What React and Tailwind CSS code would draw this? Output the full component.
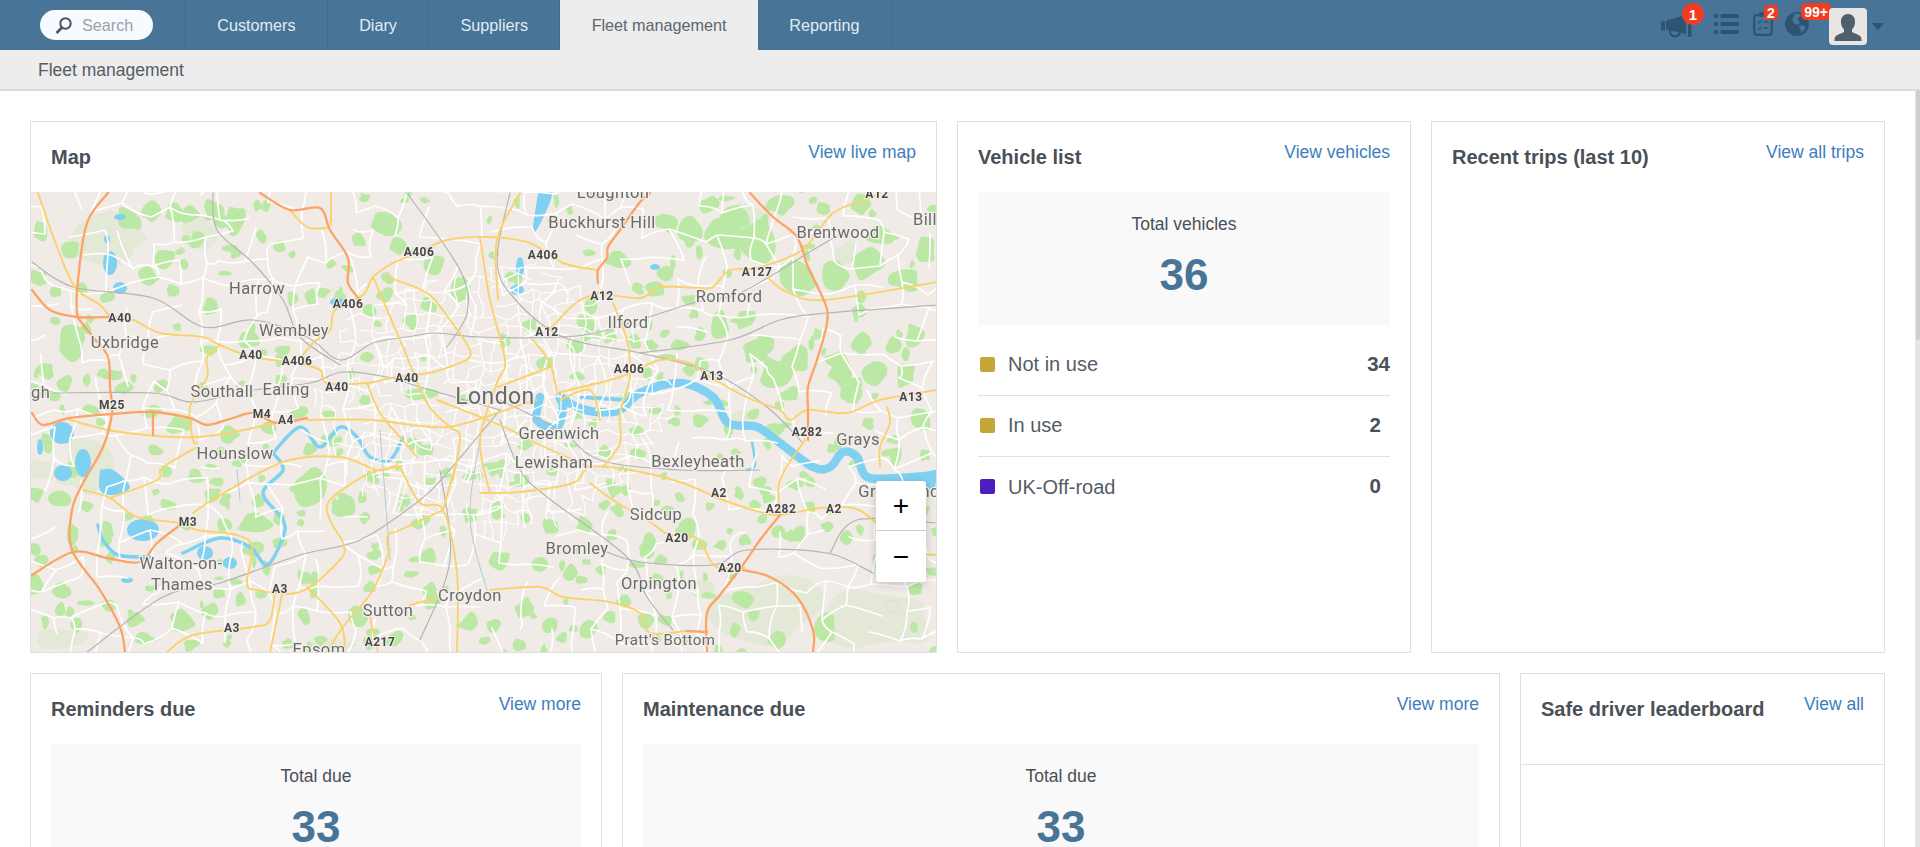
import React from "react";

function rng(seed) {
  let s = seed;
  return () => {
    s = (s * 16807) % 2147483647;
    return (s - 1) / 2147483646;
  };
}
function blob(r, x, y, rx, ry = rx) {
  const n = 9;
  const pts = [];
  for (let i = 0; i < n; i++) {
    const a = (i / n) * Math.PI * 2;
    const k = 0.55 + r() * 0.7;
    pts.push([x + Math.cos(a) * rx * k, y + Math.sin(a) * ry * k]);
  }
  const mid = (a, b) => [(a[0] + b[0]) / 2, (a[1] + b[1]) / 2];
  const f = (v) => v.toFixed(1);
  const s0 = mid(pts[n - 1], pts[0]);
  let d = `M${f(s0[0])} ${f(s0[1])}`;
  for (let i = 0; i < n; i++) {
    const m = mid(pts[i], pts[(i + 1) % n]);
    d += `Q${f(pts[i][0])} ${f(pts[i][1])} ${f(m[0])} ${f(m[1])}`;
  }
  return d + "Z";
}
// smooth line through points (Catmull-Rom)
const line = (p) => {
  let d = `M${p[0][0]} ${p[0][1]}`;
  for (let i = 0; i < p.length - 1; i++) {
    const a = p[Math.max(i - 1, 0)], b = p[i], c = p[i + 1], e = p[Math.min(i + 2, p.length - 1)];
    const c1 = [b[0] + (c[0] - a[0]) / 6, b[1] + (c[1] - a[1]) / 6];
    const c2 = [c[0] - (e[0] - b[0]) / 6, c[1] - (e[1] - b[1]) / 6];
    d += `C${c1[0].toFixed(1)} ${c1[1].toFixed(1)} ${c2[0].toFixed(1)} ${c2[1].toFixed(1)} ${c[0]} ${c[1]}`;
  }
  return d;
};

const greenBig = [
  [728,232,24,18],[760,240,20,22],[735,215,18,13],[690,230,14,15],[668,222,13,12],[800,275,18,20],[835,275,18,14],[868,265,16,18],[905,280,15,13],[880,235,16,12],[780,205,16,13],[800,185,12,11],[860,205,11,11],[925,250,11,14],[710,205,12,9],
  [775,375,20,22],[795,360,16,17],[755,350,16,13],[720,325,14,14],[745,320,13,11],[840,370,13,18],[875,375,14,13],[860,345,12,12],[915,335,12,13],[905,375,12,14],[850,395,15,11],[920,420,11,13],[895,345,11,9],[765,345,12,10],[790,395,12,9],
  [618,260,14,9],[655,290,12,8],[665,275,11,9],[610,335,9,9],[586,322,11,11],[590,305,7,10],[575,345,9,8],[530,325,8,7],[505,340,8,8],[545,365,9,8],[630,395,8,6],[650,345,8,8],[680,345,10,8],[700,335,7,7],[700,365,8,8],
  [128,220,16,14],[150,212,12,11],[175,215,13,11],[190,215,11,10],[215,210,14,12],[235,220,12,16],[280,248,9,7],[197,240,10,9],[165,260,12,12],[148,276,11,13],[38,278,9,9],[70,250,10,10],[40,232,7,11],
  [385,223,18,12],[358,240,9,9],[398,245,8,11],[436,265,11,10],[428,305,11,10],[458,290,12,14],[410,320,9,8],[385,295,9,8],[340,298,8,10],[370,310,7,9],[312,298,8,10],[292,300,7,8],
  [70,345,16,19],[45,370,12,10],[65,385,9,10],[210,350,10,6],[250,340,16,9],[200,390,10,8],[125,388,10,8],[160,385,8,8],[90,410,11,8],[180,425,14,10],[230,435,10,10],[298,412,9,8],[330,440,11,7],[280,380,7,7],[420,395,20,8],[465,400,7,8],
  [30,390,10,8],[48,447,8,11],[72,470,7,8],[36,495,10,8],[60,500,11,9],[35,550,8,9],
  [310,490,20,24],[345,505,14,16],[255,525,18,12],[255,550,12,8],
  [212,495,10,9],[167,505,10,8],[195,477,8,8],[225,500,7,7],[155,450,8,6],[148,520,8,6],[108,530,8,10],[72,535,7,10],[258,500,7,7],[35,585,10,12],[60,590,12,9],[60,610,9,8],[108,605,8,7],[180,620,13,12],[210,612,8,10],[135,620,10,9],[145,640,11,8],[190,645,9,8],[240,600,7,8],[305,617,8,8],[360,615,11,11],[395,640,10,9],[320,640,7,6],[432,600,10,11],[470,622,11,10],[495,625,8,8],
  [372,478,7,8],[375,570,8,6],[375,555,8,6],[430,557,9,9],[430,590,8,8],[425,520,7,6],[405,500,7,7],[470,515,9,8],[470,475,7,7],[500,560,12,10],[520,480,9,8],[497,510,9,9],[500,465,7,6],
  [550,527,10,9],[585,525,10,10],[540,565,9,7],[570,572,8,9],[600,570,7,6],[617,510,8,7],[612,535,7,6],[650,540,7,7],[625,600,10,7],[660,560,7,6],[688,530,9,12],[700,545,8,8],[648,545,9,8],[612,490,6,9],[605,505,6,5],[668,512,8,6],[720,545,7,5],[525,610,11,10],[550,625,9,8],[590,630,9,10],[645,620,9,8],[520,645,8,7],
  [745,600,13,9],[755,615,7,7],[735,630,5,8],[825,627,12,17],[795,485,10,6],[810,482,6,6],[765,490,7,5],[740,495,6,5],[745,540,7,6],[860,530,6,6],[910,525,8,8],[755,505,6,5],[680,497,6,6],[625,490,7,6],[665,620,10,6],[775,640,10,9],
  [605,452,7,7],[640,455,10,7],[700,420,10,7],[775,430,10,8],[655,410,8,6],[525,445,9,6],[495,470,7,8],
  [838,443,6,9],[895,455,8,12],[925,455,7,8],[925,510,7,6],[893,440,7,5],
];
const paleBig = [[770,610,60,35],[880,620,60,35],[110,240,40,32],[40,470,20,16],[85,470,30,30],[330,645,30,8],[740,420,13,10],[700,590,18,12],[60,640,40,14],[200,232,20,18],[125,250,14,14],[745,215,20,16],[846,255,12,16],[270,290,6,6]];

function buildMap() {
  const r = rng(4711);
  const green = [];
  greenBig.forEach(([x, y, a, b]) => green.push(blob(r, x, y, a, b)));
  for (let i = 0; i < 300; i++) {
    const x = 31 + r() * 906;
    const y = 192 + r() * 461;
    const dc = Math.hypot((x - 490) / 1.3, y - 395);
    if (dc < 60) continue;
    green.push(blob(r, x, y, 3 + r() * 6, 3 + r() * 5));
  }
  const pale = paleBig.map(([x, y, a, b]) => blob(r, x, y, a, b));
  const seg = (a, b, out) => {
    const mx = (a[0] + b[0]) / 2 + (r() - 0.5) * 9;
    const my = (a[1] + b[1]) / 2 + (r() - 0.5) * 9;
    out.push(`M${a[0].toFixed(0)} ${a[1].toFixed(0)}Q${mx.toFixed(0)} ${my.toFixed(0)} ${b[0].toFixed(0)} ${b[1].toFixed(0)}`);
  };
  const grid = (cell, jit, keep, p, out) => {
    const nodes = {};
    const N = (i, j) => {
      const k = i + "," + j;
      if (!nodes[k]) nodes[k] = [25 + i * cell + (r() - 0.5) * jit, 186 + j * cell + (r() - 0.5) * jit];
      return nodes[k];
    };
    for (let i = 0; i * cell < 925; i++)
      for (let j = 0; j * cell < 475; j++) {
        const a = N(i, j);
        if (!keep(a)) continue;
        if (r() < p) seg(a, N(i + 1, j), out);
        if (r() < p) seg(a, N(i, j + 1), out);
      }
  };
  const roads = [];
  grid(25, 18, () => true, 0.58, roads);
  const fine = [];
  grid(13, 9, ([x, y]) => Math.hypot((x - 490) / 1.35, y - 395) < 130, 0.7, fine);
  return { green: green.join(""), pale: pale.join(""), roads: roads.join(""), fine: fine.join("") };
}
const M = buildMap();

const orange = [
  [[108,193],[87,223],[78,280],[77,313],[82,323],[93,337],[108,357],[110,387],[112,413],[103,447],[83,483],[72,510],[72,550],[100,590],[120,627],[125,652]],
  [[32,290],[50,310],[77,317],[110,317]],
  [[32,413],[43,425],[70,418],[113,414],[153,412],[190,418],[207,425],[233,418],[253,413],[277,423],[307,418]],
  [[260,193],[290,210],[320,208],[330,230],[348,258],[348,283],[360,300]],
  [[32,575],[73,552],[107,558],[140,562],[157,543],[183,523]],
  [[650,193],[640,202],[620,230],[608,247],[607,258],[598,270],[598,283]],
  [[750,193],[773,217],[797,237],[808,267],[825,303],[827,323],[817,360],[808,387],[808,410],[808,440]],
  [[780,515],[760,540],[743,565],[720,595],[707,613],[707,652]],
  [[743,570],[770,577],[797,597],[813,630],[813,652]],
  [[687,631],[707,632]],
  [[153,412],[153,435]],
];
const yellow = [
  [[110,317],[133,320],[160,333],[203,337],[220,345],[253,357],[297,363],[320,370],[327,383],[367,383],[390,378],[433,372],[467,360]],
  [[297,363],[313,343],[330,330],[335,310],[363,295],[373,277],[393,263],[420,252],[447,240],[490,237],[530,243],[563,263],[597,270]],
  [[597,293],[640,298],[660,287],[700,288],[713,287],[730,270],[757,268],[802,250],[833,213],[870,198],[880,193]],
  [[767,277],[787,292],[825,300],[937,282]],
  [[613,303],[627,340],[630,377],[620,413],[620,443],[603,467]],
  [[547,332],[577,302],[597,295]],
  [[533,340],[550,363],[557,393]],
  [[498,387],[550,367]],
  [[557,393],[620,377],[660,360],[690,363],[700,370],[727,387],[753,400],[780,410],[790,420],[808,410],[847,413],[880,400],[937,390]],
  [[887,407],[890,423],[880,447],[880,467]],
  [[480,493],[520,492],[573,483],[590,467],[630,470],[680,482],[723,500],[760,512],[780,515],[820,508],[853,508],[873,520],[905,550],[937,555]],
  [[780,515],[780,480],[805,440]],
  [[590,483],[613,500],[647,520],[670,535],[697,538],[710,560],[720,568],[745,568]],
  [[490,590],[540,587],[563,597],[610,602],[640,613],[650,633],[687,631]],
  [[38,193],[57,247],[75,287],[100,305],[110,317]],
  [[220,345],[207,357],[207,377],[190,407],[193,440],[197,443]],
  [[70,420],[120,432],[197,437],[277,423]],
  [[83,490],[110,498],[137,517],[180,523],[197,530],[237,535],[252,547],[247,583],[257,590],[300,592],[340,560],[343,543],[330,520],[330,500],[370,473],[400,467]],
  [[110,498],[157,480],[162,468],[197,447]],
  [[193,513],[217,497],[283,462],[340,457],[377,470],[397,465]],
  [[275,590],[270,620],[253,627],[193,635],[167,652]],
  [[283,590],[270,652]],
  [[307,587],[340,623],[345,652]],
  [[390,550],[373,590],[343,627],[327,652]],
  [[443,510],[400,530],[388,535],[388,550]],
  [[400,467],[420,503],[443,510],[457,573],[457,652]],
  [[457,460],[443,510]],
  [[410,605],[440,597]],
  [[370,617],[378,652]],
  [[367,383],[380,413],[400,437],[417,457]],
  [[373,277],[403,347],[427,403],[450,427],[460,437],[453,480]],
  [[387,277],[427,293],[450,320],[470,350],[467,360]],
  [[307,420],[373,420],[447,427],[520,405],[537,400]],
  [[290,210],[307,227],[327,228]],
  [[331,193],[331,225]],
  [[480,237],[490,300],[505,360],[497,383],[480,440],[490,493]],
  [[437,400],[500,425],[540,445],[590,467]],
  [[520,193],[497,240],[498,300]],
  [[560,400],[590,390],[600,420]],
];
const rail = [
  [[32,262],[73,287],[153,298],[203,327],[253,320],[307,337],[340,360],[373,343],[407,337],[437,333],[480,337],[560,337],[607,330],[693,303],[740,293],[813,250],[847,230]],
  [[213,193],[217,230],[253,263],[283,300],[300,337],[340,365]],
  [[53,393],[153,393],[193,402],[253,390],[310,383],[343,372],[387,377],[420,387],[500,410]],
  [[407,193],[460,270],[467,313],[447,347]],
  [[510,193],[497,260],[513,297],[563,337],[640,353],[713,373],[767,407],[803,443]],
  [[640,353],[730,340],[780,320],[827,313],[937,305]],
  [[87,652],[163,597],[220,583],[300,555],[360,540],[420,500],[447,473],[500,410]],
  [[500,420],[520,470],[547,497],[627,557],[647,597],[673,630]],
  [[607,552],[640,562],[713,565],[747,550],[827,553],[873,573]],
  [[830,553],[857,520],[937,523]],
  [[500,400],[560,430],[600,460],[680,470],[760,470]],
  [[440,470],[450,560],[420,640]],
];
const thin = [
  [[480,440],[470,520],[490,600]],
  [[380,430],[390,560]],
  [[237,470],[240,500]],
];
const river = [
  { d: [[540,397],[537,420],[557,427],[563,407],[560,397],[577,407],[597,412],[620,410],[640,393],[680,383],[713,397],[728,423],[757,427],[780,443],[813,467],[830,467],[843,452],[857,457],[867,477],[897,478],[937,475]], w: 8.5 },
  { d: [[273,453],[300,427],[320,447],[340,427],[357,437],[370,457],[390,460],[403,438]], w: 3.5 },
  { d: [[273,453],[283,470],[263,493],[283,520],[283,537],[267,565],[250,547],[220,538],[183,553]], w: 3.5 },
  { d: [[580,397],[627,400]], w: 4 },
  { d: [[98,525],[103,540],[118,555],[150,557]], w: 3.5 },
  { d: [[752,442],[755,465],[747,470]], w: 2.5 },
];
const waterPoly = [
  [[100,470],[113,470],[130,487],[113,495],[100,490],[100,470]],
  [[538,193],[552,193],[542,220],[533,232],[538,193]],
  [[893,483],[937,470],[937,487],[905,488],[893,483]],
];
const waterEll = [[143,530,16,11],[83,463,8,14],[63,473,9,8],[62,433,12,11],[520,267,4,10],[517,290,7,5],[655,267,5,3],[110,263,7,12],[120,288,7,6],[120,217,6,3],[107,239,3,4],[337,302,7,4],[230,563,7,6],[205,553,8,7],[127,580,6,3],[40,447,3,8]];

const towns = [
  ["Loughton",613,198,16.5],["Buckhurst Hill",602,228,16.5],["Brentwood",838,238,16.5],["Harrow",257,294,16.5],["Wembley",294,336,16.5],["Uxbridge",125,348,16.5],["Southall",222,397,16.5],["Ealing",286,395,16.5],["Hounslow",235,459,16.5],["Romford",729,302,16.5],["Ilford",628,328,16.5],["Greenwich",559,439,16.5],["Lewisham",554,468,16.5],["Bexleyheath",698,467,16.5],["Grays",858,445,16.5],["Sidcup",656,520,16.5],["Bromley",577,554,16.5],["Orpington",659,589,16.5],["Croydon",470,601,16.5],["Sutton",388,616,16.5],["Walton-on-",181,569,16.5],["Thames",182,590,16.5],["Pratt's Bottom",665,645,15],["Epsom",319,655,16.5],["Gravesend",899,497,16.5],["London",495,404,23],
];
const shields = [
  ["A406",419,256],["A406",348,308],["A40",120,322],["A40",251,359],["A406",297,365],["A40",337,391],["A40",407,382],["M25",112,409],["M4",262,418],["A4",286,424],["A406",543,259],["A12",877,198],["A127",757,276],["A12",602,300],["A12",547,336],["A406",629,373],["A13",712,380],["A13",911,401],["A282",807,436],["M3",188,526],["A3",280,593],["A3",232,632],["A217",380,646],["A2",719,497],["A282",781,513],["A2",834,513],["A20",677,542],["A20",730,572],
];

function MapArt() {
  return (
    <svg viewBox="31 192 906 461" width="906" height="461" className="block blur-[0.4px] font-['Roboto',sans-serif]">
      <rect x="31" y="192" width="906" height="461" fill="#f0ebe6" />
      <path d={M.pale} fill="#e4e8d6" />
      <path d={M.green} fill="#bce8a6" />
      <g fill="#80d1f1">
        {waterPoly.map((p, i) => <path key={i} d={line(p) + "Z"} />)}
        {waterEll.map(([x, y, a, b], i) => <ellipse key={i} cx={x} cy={y} rx={a} ry={b} />)}
      </g>
      <g fill="none" stroke="#80d1f1" strokeLinejoin="round" strokeLinecap="round">
        {river.map((p, i) => <path key={i} d={line(p.d)} strokeWidth={p.w} />)}
      </g>
      <path d={M.roads} fill="none" stroke="#ffffff" strokeWidth="1.7" strokeLinecap="round" />
      <path d={M.fine} fill="none" stroke="#ffffff" strokeWidth="1.2" strokeLinecap="round" />
      <g fill="none" strokeLinejoin="round" strokeLinecap="round">
        {rail.map((p, i) => <path key={i} d={line(p)} stroke="#b4b4b4" strokeWidth="1.2" />)}
        {thin.map((p, i) => <path key={i} d={line(p)} stroke="#b7c9d6" strokeWidth="1" />)}
        {yellow.map((p, i) => <path key={i} d={line(p)} stroke="#f9d26d" strokeWidth="1.9" />)}
        {orange.map((p, i) => <path key={i} d={line(p)} stroke="#fda366" strokeWidth="2.3" />)}
      </g>
      <g textAnchor="middle" fill="#6a6a6a" stroke="#f2eeea" strokeWidth="2.5" paintOrder="stroke" letterSpacing="0.4">
        {towns.map(([t, x, y, s]) => <text key={t} x={x} y={y} fontSize={s}>{t}</text>)}
        <text x="31" y="398" fontSize="16.5" textAnchor="start">gh</text>
        <text x="913" y="225" fontSize="16.5" textAnchor="start">Bill</text>
      </g>
      <g textAnchor="middle" fill="#474747" stroke="#f2eeea" strokeWidth="2" paintOrder="stroke" fontWeight="700" letterSpacing="0.5">
        {shields.map(([t, x, y]) => <text key={t + x} x={x} y={y} fontSize="12">{t}</text>)}
      </g>
      <circle cx="892" cy="606" r="6" fill="none" stroke="#e2ded9" strokeWidth="2" />
    </svg>
  );
}

const ICON = "#2f5471";

function Megaphone() {
  return (
    <svg viewBox="0 0 34 24" className="w-[34px] h-[24px]" fill={ICON}>
      <path d="M1 7.5L5 7V17L1 16.5Z" />
      <path d="M6 6.6L26 1V20L6 15.5Z" />
      <rect x="28" y="0" width="3.5" height="23" rx="1" />
      <path d="M10 16.5a5 5 0 0 0 10 1.5" fill="none" stroke={ICON} strokeWidth="2.4" />
    </svg>
  );
}
function ListIcon() {
  return (
    <svg viewBox="0 0 25 22" className="w-[25px] h-[22px]" fill={ICON}>
      <circle cx="2.2" cy="3" r="2.2" /><rect x="6.5" y="1" width="18.5" height="4" rx="1" />
      <circle cx="2.2" cy="11" r="2.2" /><rect x="6.5" y="9" width="18.5" height="4" rx="1" />
      <circle cx="2.2" cy="19" r="2.2" /><rect x="6.5" y="17" width="18.5" height="4" rx="1" />
    </svg>
  );
}
function ClipboardIcon() {
  return (
    <svg viewBox="0 0 20 25" className="w-[20px] h-[25px]" fill="none" stroke={ICON}>
      <rect x="1.2" y="4" width="17.6" height="19.8" rx="2.5" strokeWidth="2.2" />
      <rect x="6" y="1" width="8" height="5" rx="1.5" fill={ICON} strokeWidth="0" />
      <path d="M5 10.5l1.5 1.5 2.2-3M5 17l1.5 1.5 2.2-3" strokeWidth="1.1" />
      <path d="M10.5 11h5M10.5 17h5" strokeWidth="1.5" />
    </svg>
  );
}
function GlobeIcon() {
  return (
    <svg viewBox="0 0 24 24" className="w-[24px] h-[24px]">
      <circle cx="12" cy="12" r="12" fill={ICON} />
      <path d="M9 2c3-1 6-.5 7 1-1 2-3 2-3.5 3.5S15 9 14.5 11s-3 1.5-5 .5S7 8 8 6s1-2 1-4ZM14 14c2-1 5-1 6 .5s-1.5 5-4 6.5c-1-1 .5-3-.5-4S13.500 15 14 14Z" fill="#487597" />
    </svg>
  );
}
function UserIcon() {
  return (
    <svg viewBox="0 0 38 37" className="w-[38px] h-[37px]">
      <rect width="38" height="37" rx="4" fill="#e8e6e4" />
      <path d="M19 6c5 0 7.500 4 7 9-.3 3-1.500 5-3 6.500V24c2 1.500 7 2.500 8.500 4.500 1 1.300 1 3.200 1 4.500H5.500c0-1.300 0-3.200 1-4.500C8 26.500 13 25.500 15 24v-2.500C13.500 20 12.300 18 12 15c-.5-5 2-9 7-9Z" fill="#4f5f6e" />
    </svg>
  );
}
function Badge({ className, children }) {
  return (
    <span className={"absolute flex items-center justify-center bg-[#f03c22] text-white font-bold text-[14px] leading-none " + className}>
      {children}
    </span>
  );
}

function Card({ title, link, children, className = "" }) {
  return (
    <div className={"border border-[#e0e0e0] bg-white " + className}>
      <div className="flex justify-between items-start h-[70px] px-[20px]">
        <h3 className="mt-[25px] text-[20px] leading-[21px] font-bold text-[#4a5058]">{title}</h3>
        <a className="mt-[20px] text-[17.5px] leading-[20px] text-[#3d7ebd]">{link}</a>
      </div>
      {children}
    </div>
  );
}
function Stat({ label, value }) {
  return (
    <div className="h-[133px] bg-[#f9f9f9] flex flex-col items-center">
      <div className="mt-[23px] text-[17.5px] leading-[18px] text-[#4a5058]">{label}</div>
      <div className="mt-[18px] text-[44px] leading-[48px] font-bold text-[#487597]">{value}</div>
    </div>
  );
}
function Row({ color, label, value, pad, last }) {
  return (
    <div className={"h-[61px] pb-[2px] flex items-center " + (last ? "" : "border-b border-[#e0e0e0]")}>
      <span className="ml-[2px] w-[15px] h-[15px] rounded-[2px]" style={{ backgroundColor: color }} />
      <span className="ml-[13px] flex-1 text-[20px] text-[#555c65]">{label}</span>
      <span className={"text-[20.5px] font-bold text-[#4a5058] " + pad}>{value}</span>
    </div>
  );
}

const tabs = ["Customers", "Diary", "Suppliers", "Fleet management", "Reporting"];

export default function App() {
  return (
    <div className="h-[847px] overflow-hidden relative flex flex-col bg-white font-['Liberation_Sans',Arial,sans-serif]">
      <header className="h-[50px] shrink-0 bg-[#487597] flex items-stretch">
        <div className="w-[186px] shrink-0 border-r border-[#3f6a8a] flex items-center pl-[40px]">
          <div className="w-[113px] h-[30px] rounded-[15px] bg-[#f7fbff] flex items-center pl-[15px]">
            <svg viewBox="0 0 17 17" className="w-[17px] h-[17px]" fill="none" stroke="#4a5560" strokeWidth="2">
              <circle cx="10.500" cy="6.500" r="5.200" />
              <path d="M7 10.500L1.500 16" strokeWidth="2.600" />
            </svg>
            <span className="ml-[10px] text-[16.2px] text-[#9a9fa5]">Search</span>
          </div>
        </div>
        {tabs.map((t) => {
          const active = t === "Fleet management";
          return (
            <div
              key={t}
              className={
                "flex items-center px-[31.3px] text-[16.2px] " +
                (active ? "bg-[#ededed] text-[#5b6670]" : "border-r border-[#3f6a8a] text-[#e0ecf4]")
              }
            >
              {t}
            </div>
          );
        })}
        <div className="ml-auto flex items-start relative pr-[36px]">
          <div className="relative mt-[14px] w-[34px] h-[24px]"><Megaphone /><Badge className="w-[22px] h-[22px] rounded-full left-[22px] -top-[11px] text-[15px]">1</Badge></div>
          <div className="relative mt-[13px] ml-[20px] w-[25px] h-[22px]"><ListIcon /></div>
          <div className="relative mt-[11px] ml-[14px] w-[20px] h-[25px]"><ClipboardIcon /><Badge className="w-[14px] h-[15px] rounded-[4px] left-[11px] -top-[6px]">2</Badge></div>
          <div className="relative mt-[12px] ml-[12px] w-[24px] h-[24px]"><GlobeIcon /><Badge className="w-[30px] h-[17px] rounded-[5px] left-[16px] -top-[9px]">99+</Badge></div>
          <div className="relative mt-[8px] ml-[20px] w-[38px] h-[37px]"><UserIcon /></div>
          <div className="mt-[23px] ml-[5px] w-0 h-0 border-x-[6px] border-x-transparent border-t-[7px] border-t-[#2f5471]" />
        </div>
      </header>
      <div className="h-[41px] shrink-0 bg-[#ededed] border-b-2 border-[#d8dcdc] flex items-center pl-[38px] pt-[1px] text-[17.5px] text-[#555c65]">
        Fleet management
      </div>
      <main className="flex-1 min-h-0 overflow-hidden pl-[30px] pt-[30px] pr-[35px]">
        <div className="grid grid-cols-[907px_454px_454px] gap-[20px]">
          <Card title="Map" link="View live map" className="h-[532px]">
            <MapWithControls />
          </Card>
          <Card title="Vehicle list" link="View vehicles" className="h-[532px]">
            <div className="px-[20px]">
              <Stat label="Total vehicles" value="36" />
              <div className="mt-[10px]">
                <Row color="#c5a637" label="Not in use" value="34" pad="" />
                <Row color="#c5a637" label="In use" value="2" pad="pr-[9px]" />
                <Row color="#4b1fbf" label="UK-Off-road" value="0" pad="pr-[9px]" last />
              </div>
            </div>
          </Card>
          <Card title="Recent trips (last 10)" link="View all trips" className="h-[532px]" />
        </div>
        <div className="mt-[20px] grid grid-cols-[572px_878px_365px] gap-[20px]">
          <Card title="Reminders due" link="View more" className="h-[400px]">
            <div className="px-[20px]"><Stat label="Total due" value="33" /></div>
          </Card>
          <Card title="Maintenance due" link="View more" className="h-[400px]">
            <div className="px-[20px]"><Stat label="Total due" value="33" /></div>
          </Card>
          <Card title="Safe driver leaderboard" link="View all" className="h-[400px]">
            <div className="mt-[20px] border-t border-[#e0e0e0]" />
          </Card>
        </div>
      </main>
      <div className="absolute right-0 top-[90px] bottom-0 w-[5px] bg-[#e4e4e4]">
        <div className="ml-[1px] h-[250px] rounded-[2px] bg-[#cfcfcf]" />
      </div>
    </div>
  );
}

function MapWithControls() {
  return (
    <div className="relative h-[460px] overflow-hidden">
      <MapArt />
      <div className="absolute left-[845px] top-[289px] w-[50px] h-[101px] bg-white rounded-[3px] shadow-[0_2px_10px_rgba(0,0,0,0.2)] flex flex-col">
        <div className="h-[50px] flex items-center justify-center border-b border-[#cccccc] text-[28px] leading-none text-black">+</div>
        <div className="flex-1 flex items-center justify-center text-[28px] leading-none text-black">−</div>
      </div>
    </div>
  );
}
